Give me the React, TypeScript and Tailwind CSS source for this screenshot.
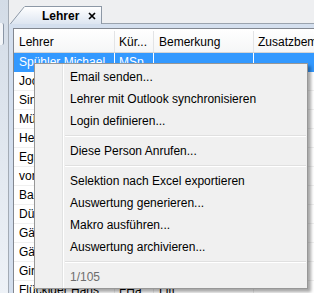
const FONT = "font-['Liberation_Sans',Arial,sans-serif]";

type Row = { name: string; short: string; note?: string };

const ROWS: Row[] = [
  { name: "Spühler Michael", short: "MSp" },
  { name: "Jochum Andreas", short: "JAn" },
  { name: "Sinniger Beat", short: "SBe" },
  { name: "Müller Peter", short: "MPe" },
  { name: "Herzog Urs", short: "HUr" },
  { name: "Egli Thomas", short: "ETh" },
  { name: "von Arx Daniel", short: "vAD" },
  { name: "Bachmann Ruth", short: "BRu" },
  { name: "Dürr Martin", short: "DMa" },
  { name: "Gämperli Eva", short: "GEv" },
  { name: "Gächter Rolf", short: "GRo" },
  { name: "Giroud Anna", short: "GAn" },
  { name: "Flückiger Hans", short: "FHa", note: "Lift" },
];

// null = Trennlinie
const MENU: ({ label: string; disabled?: boolean } | null)[] = [
  { label: "Email senden..." },
  { label: "Lehrer mit Outlook synchronisieren" },
  { label: "Login definieren..." },
  null,
  { label: "Diese Person Anrufen..." },
  null,
  { label: "Selektion nach Excel exportieren" },
  { label: "Auswertung generieren..." },
  { label: "Makro ausführen..." },
  { label: "Auswertung archivieren..." },
  null,
  { label: "1/105", disabled: true },
];

function Tab() {
  return (
    <div className="flex items-end h-[24px] shrink-0 bg-[#eeeff1]">
      <svg width="16" height="19" viewBox="0 0 16 19" className="block -mb-px">
        <defs>
          <linearGradient id="tabfill" x1="0" y1="0" x2="0" y2="1">
            <stop offset="0" stopColor="#ffffff" />
            <stop offset="1" stopColor="#dbe4f0" />
          </linearGradient>
        </defs>
        <polygon points="0,19 15,0.5 16,0.5 16,19" fill="url(#tabfill)" />
        <line x1="0.5" y1="19" x2="15.5" y2="0.5" stroke="#8d98a6" strokeWidth="1" />
      </svg>
      <div className="h-[19px] -mb-px flex items-center pl-[17px] pr-[5px] border-t border-r border-[#8d98a6] bg-gradient-to-b from-white to-[#dbe4f0]">
        <span className="text-[12px] font-bold text-black leading-none">Lehrer</span>
        <svg width="8" height="8" viewBox="0 0 8 8" className="ml-[9px]">
          <path d="M1 1 L7 7 M7 1 L1 7" stroke="#000" strokeWidth="1.7" />
        </svg>
      </div>
      <div className="flex-1 h-full border-b border-[#9aa3ae]" />
    </div>
  );
}

function Grid() {
  return (
    <div className="flex-1 min-h-0 bg-white border-l border-t border-[#828790] overflow-hidden">
      <div className="flex h-[24px] pt-[2px] bg-gradient-to-b from-white to-[#f5f6f7] border-b border-[#d5d5d5] text-[12px] text-black">
        <div className="w-[101px] shrink-0 pl-[5px] flex items-center border-r border-[#e3e4e6]">Lehrer</div>
        <div className="w-[39px] shrink-0 pl-[4px] flex items-center border-r border-[#e3e4e6]">Kür...</div>
        <div className="w-[100px] shrink-0 pl-[5px] flex items-center border-r border-[#e3e4e6]">Bemerkung</div>
        <div className="flex-1 pl-[4px] flex items-center whitespace-nowrap">Zusatzbemerkung</div>
      </div>
      {ROWS.map((r, i) => {
        const sel = i === 0;
        const line = sel ? "border-white" : "border-[#ececec]";
        return (
          <div
            key={r.name}
            className={`flex h-[19px] text-[12px] border-b ${
              sel ? "bg-[#3399ff] text-white border-[#3399ff]" : "text-black border-[#f0f0f0]"
            }`}
          >
            <div className={`w-[101px] shrink-0 pl-[5px] flex items-center whitespace-nowrap overflow-hidden border-r ${line}`}>
              {r.name}
            </div>
            <div className={`w-[39px] shrink-0 pl-[4px] flex items-center border-r ${line}`}>{r.short}</div>
            <div className={`w-[100px] shrink-0 pl-[5px] flex items-center border-r ${line}`}>{r.note ?? ""}</div>
            <div className="flex-1" />
          </div>
        );
      })}
    </div>
  );
}

function ContextMenu() {
  return (
    <div className="absolute left-[34px] top-[63px] w-[274px] bg-[#f0f0f0] border border-[#979797] shadow-[3px_3px_3px_rgba(0,0,0,0.35)] pt-[2px] text-[12px]">
      {/* Icon-Spalte links, wie im Windows-7-Menü */}
      <div className="absolute left-[27px] top-0 bottom-0 w-[2px] border-l border-[#e2e3e3] bg-white" />
      {MENU.map((m, i) =>
        m === null ? (
          <div key={i} className="h-[8px] flex items-center pl-[30px] pr-[1px]">
            <div className="flex-1 h-[2px] border-t border-[#e0e0e0] bg-white" />
          </div>
        ) : (
          <div
            key={i}
            className={`h-[22px] flex items-center pl-[35px] ${m.disabled ? "text-[#6d6d6d]" : "text-black"}`}
          >
            {m.label}
          </div>
        ),
      )}
    </div>
  );
}

export default function App() {
  return (
    <div className={`relative w-[314px] h-[293px] overflow-hidden flex ${FONT}`}>
      <div className="w-[9px] shrink-0 border-r border-[#a3abb5] bg-gradient-to-b from-[#d3dce7] to-[#eef2f7] pt-[23px]">
        <div className="h-[22px] w-[4px] bg-white/70 border-r border-[#8a96a6] rounded-r-[2px]" />
      </div>
      <div className="flex-1 min-h-0 flex flex-col">
        <Tab />
        <div className="flex-1 min-h-0 flex flex-col pl-[4px] pt-[4px] bg-[#d4dfee]">
          <Grid />
        </div>
      </div>
      <ContextMenu />
    </div>
  );
}
